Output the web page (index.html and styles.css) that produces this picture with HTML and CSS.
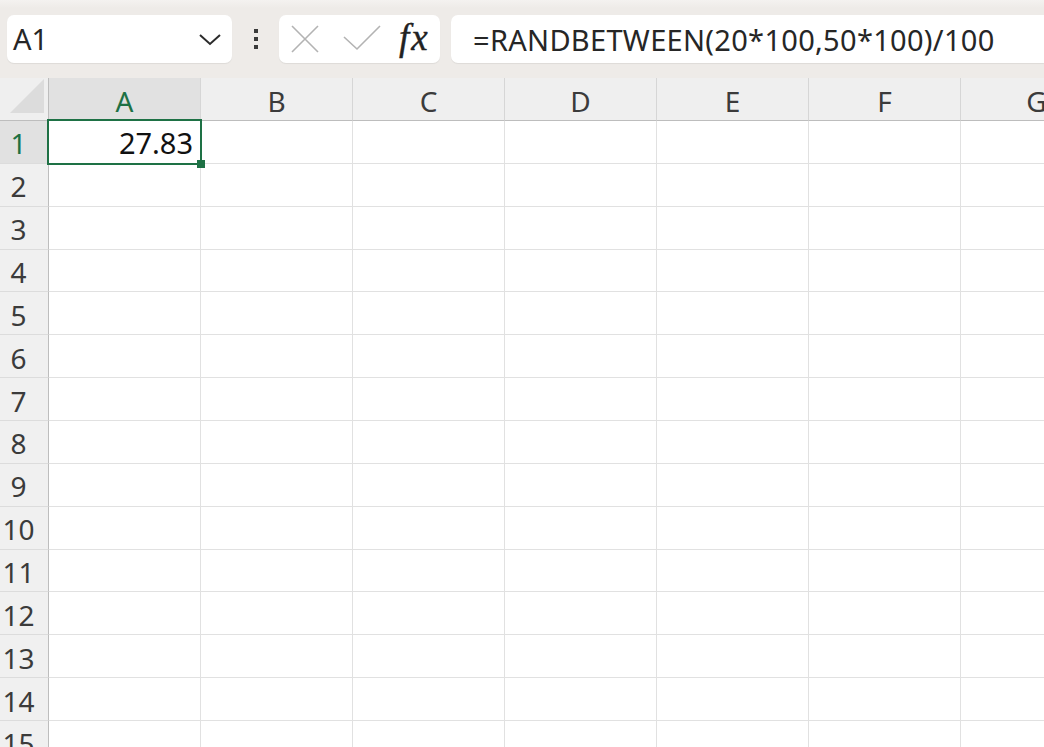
FILE: index.html
```html
<!DOCTYPE html>
<html lang="en">
<head>
<meta charset="utf-8">
<title>Book1 - Excel</title>
<link rel="stylesheet" href="styles.css">
</head>
<body>
  <div class="formula-bar">
    <div class="name-box">
      <span class="name-value">A1</span>
      <svg class="chevron" width="24" height="14" viewBox="0 0 24 14"><path d="M2 2 L12 11 L22 2" fill="none" stroke="#2b2b2b" stroke-width="2"/></svg>
    </div>
    <div class="grip"><span></span><span></span><span></span></div>
    <div class="edit-buttons">
      <svg class="btn-cancel" width="28" height="28" viewBox="0 0 28 28"><path d="M1 1 L27 27 M27 1 L1 27" stroke="#b3b3b3" stroke-width="1.6" fill="none"/></svg>
      <svg class="btn-enter" width="38" height="26" viewBox="0 0 38 26"><path d="M1 12 L14 24 L37 1" stroke="#b3b3b3" stroke-width="1.6" fill="none"/></svg>
      <span class="fx">fx</span>
    </div>
    <div class="formula-input">=RANDBETWEEN(20*100,50*100)/100</div>
  </div>

  <div class="viewport">
    <div class="sheet">
      <div class="corner"><svg width="36" height="36" viewBox="0 0 36 36"><path d="M35 1 L35 35 L1 35 Z" fill="#dcdcdc"/></svg></div>
      <div class="col-head active">A</div>
      <div class="col-head">B</div>
      <div class="col-head">C</div>
      <div class="col-head">D</div>
      <div class="col-head">E</div>
      <div class="col-head">F</div>
      <div class="col-head">G</div>

      <div class="row-head active">1</div>
      <div class="cell num selected">27.83<span class="handle"></span></div>
      <div class="cell"></div><div class="cell"></div><div class="cell"></div><div class="cell"></div><div class="cell"></div><div class="cell"></div>

      <div class="row-head">2</div>
      <div class="cell"></div><div class="cell"></div><div class="cell"></div><div class="cell"></div><div class="cell"></div><div class="cell"></div><div class="cell"></div>
      <div class="row-head">3</div>
      <div class="cell"></div><div class="cell"></div><div class="cell"></div><div class="cell"></div><div class="cell"></div><div class="cell"></div><div class="cell"></div>
      <div class="row-head">4</div>
      <div class="cell"></div><div class="cell"></div><div class="cell"></div><div class="cell"></div><div class="cell"></div><div class="cell"></div><div class="cell"></div>
      <div class="row-head">5</div>
      <div class="cell"></div><div class="cell"></div><div class="cell"></div><div class="cell"></div><div class="cell"></div><div class="cell"></div><div class="cell"></div>
      <div class="row-head">6</div>
      <div class="cell"></div><div class="cell"></div><div class="cell"></div><div class="cell"></div><div class="cell"></div><div class="cell"></div><div class="cell"></div>
      <div class="row-head">7</div>
      <div class="cell"></div><div class="cell"></div><div class="cell"></div><div class="cell"></div><div class="cell"></div><div class="cell"></div><div class="cell"></div>
      <div class="row-head">8</div>
      <div class="cell"></div><div class="cell"></div><div class="cell"></div><div class="cell"></div><div class="cell"></div><div class="cell"></div><div class="cell"></div>
      <div class="row-head">9</div>
      <div class="cell"></div><div class="cell"></div><div class="cell"></div><div class="cell"></div><div class="cell"></div><div class="cell"></div><div class="cell"></div>
      <div class="row-head">10</div>
      <div class="cell"></div><div class="cell"></div><div class="cell"></div><div class="cell"></div><div class="cell"></div><div class="cell"></div><div class="cell"></div>
      <div class="row-head">11</div>
      <div class="cell"></div><div class="cell"></div><div class="cell"></div><div class="cell"></div><div class="cell"></div><div class="cell"></div><div class="cell"></div>
      <div class="row-head">12</div>
      <div class="cell"></div><div class="cell"></div><div class="cell"></div><div class="cell"></div><div class="cell"></div><div class="cell"></div><div class="cell"></div>
      <div class="row-head">13</div>
      <div class="cell"></div><div class="cell"></div><div class="cell"></div><div class="cell"></div><div class="cell"></div><div class="cell"></div><div class="cell"></div>
      <div class="row-head">14</div>
      <div class="cell"></div><div class="cell"></div><div class="cell"></div><div class="cell"></div><div class="cell"></div><div class="cell"></div><div class="cell"></div>
      <div class="row-head">15</div>
      <div class="cell"></div><div class="cell"></div><div class="cell"></div><div class="cell"></div><div class="cell"></div><div class="cell"></div><div class="cell"></div>
    </div>
  </div>
</body>
</html>
```

FILE: styles.css
```css
* { box-sizing: border-box; }

html, body {
  margin: 0;
  height: 100%;
  overflow: hidden;
  background: #ffffff;
  font-family: "Noto Sans", "Open Sans", sans-serif;
  color: #1f1f1f;
}

/* formula bar strip */
.formula-bar {
  height: 78px;
  display: flex;
  align-items: flex-start;
  padding: 15px 0 0 7px;
  background: linear-gradient(#f4f2f0 0, #eeebe8 8px, #eeebe8 100%);
}

.name-box,
.edit-buttons,
.formula-input {
  height: 48px;
  background: #ffffff;
  border-radius: 7px;
  box-shadow: 0 1px 1px rgba(0, 0, 0, 0.07);
}

.name-box {
  width: 225px;
  display: flex;
  align-items: center;
  justify-content: space-between;
  padding: 0 10px 0 6px;
}

.name-value {
  font-size: 29px;
  line-height: 1;
  color: #262626;
  margin-top: -2px;
}

.chevron { margin-top: 2px; }

.grip {
  width: 47px;
  height: 48px;
  display: flex;
  flex-direction: column;
  align-items: center;
  justify-content: center;
  gap: 4px;
}

.grip span {
  width: 4px;
  height: 4px;
  background: #3a3a3a;
}

.edit-buttons {
  width: 161px;
  display: flex;
  align-items: center;
  padding-left: 12px;
}

.btn-cancel { margin-top: -1px; }
.btn-enter { margin-left: 24px; margin-top: -2px; }

.fx {
  margin-left: 18px;
  font-family: "Liberation Serif", "DejaVu Serif", serif;
  font-style: italic;
  font-size: 37px;
  line-height: 1;
  color: #222222;
  letter-spacing: 2px;
  margin-top: -4px;
  -webkit-text-stroke: 0.4px #222222;
}

.formula-input {
  flex: 1;
  margin-left: 11px;
  border-radius: 7px 0 0 7px;
  display: flex;
  align-items: center;
  padding-left: 22px;
  font-size: 29px;
  letter-spacing: 0.3px;
  color: #262626;
}

/* worksheet grid */
.viewport {
  overflow: hidden;
  height: calc(100% - 78px);
}

.sheet {
  display: grid;
  grid-template-columns: 49px repeat(7, 152px);
  grid-template-rows: 43px repeat(15, 42.86px);
}

.corner {
  background: #efefef;
  border-right: 1px solid #bdbdbd;
  border-bottom: 1px solid #bdbdbd;
  display: flex;
  align-items: flex-end;
  justify-content: flex-end;
  padding: 0 3px 6px 0;
}

.col-head {
  background: #efefef;
  border-right: 1px solid #d6d6d6;
  border-bottom: 1px solid #bdbdbd;
  display: flex;
  align-items: center;
  justify-content: center;
  font-size: 28px;
  color: #3b3b3b;
  padding-top: 4px;
}

.row-head {
  background: #f0f0f0;
  border-right: 1px solid #bdbdbd;
  border-bottom: 1px solid #dcdcdc;
  display: flex;
  align-items: center;
  justify-content: center;
  padding: 3px 11px 0 0;
  font-size: 28px;
  color: #3b3b3b;
}

.col-head.active,
.row-head.active {
  background: #e1e1e1;
  color: #1e7145;
}

.cell {
  border-right: 1px solid #e1e1e1;
  border-bottom: 1px solid #e1e1e1;
  font-size: 29px;
  color: #111111;
  display: flex;
  align-items: center;
}

.cell.num {
  justify-content: flex-end;
  padding: 2px 7px 0 0;
}

/* active cell frame with the fill handle */
.cell.selected {
  position: relative;
}

.cell.selected::before {
  content: "";
  position: absolute;
  left: -2px;
  top: -2px;
  right: -2px;
  bottom: -2px;
  border: 2.5px solid #1e7145;
}

.handle {
  position: absolute;
  right: -5px;
  bottom: -5px;
  width: 8px;
  height: 8px;
  background: #1e7145;
}
```
